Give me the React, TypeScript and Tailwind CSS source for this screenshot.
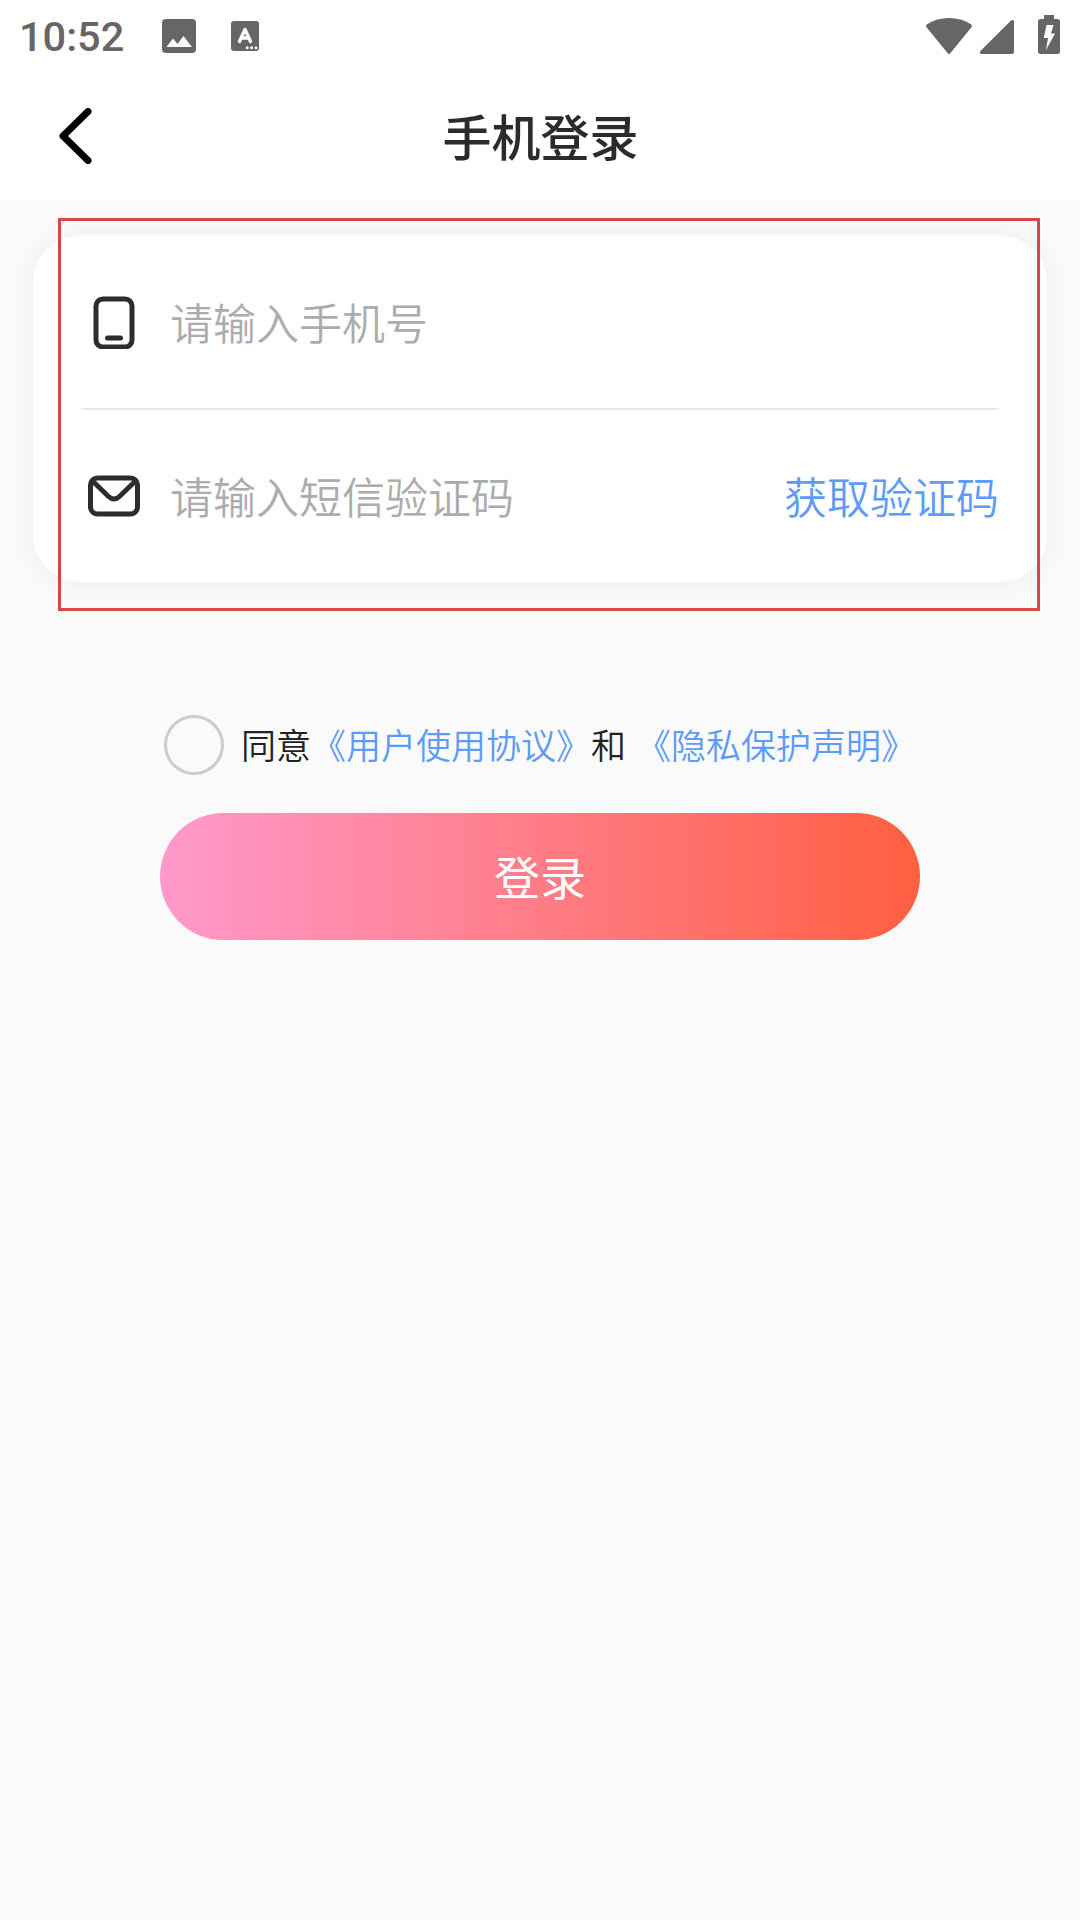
import { useState } from 'react';

const LINK_COLOR = 'text-[#5c9bf8]';

function StatusBar() {
  return (
    <div className="flex h-[72px] items-center justify-between bg-white pl-[19px] pr-5 text-[#666666]">
      <div className="flex items-center">
        <span className="w-[143px] pt-[2px] font-[Roboto] text-[41.5px] leading-none font-medium">10:52</span>
        <svg className="h-[34px] w-[34px]" viewBox="0 0 34 34" fill="currentColor">
          <rect width="34" height="34" rx="4" />
          <path d="M4.5 28 L11 19.5 L15.5 25 L21.5 17 L30 28 Z" fill="#fff" />
        </svg>
        <svg className="ml-[35px] h-[30px] w-7" viewBox="0 0 28 30" fill="none">
          <rect width="28" height="30" rx="3" fill="currentColor" />
          <path d="M8.5 20.5 L14 8.5 L19.5 20.5 M10.5 17 H17.5" stroke="#fff" strokeWidth="3.4" strokeLinecap="round" strokeLinejoin="round" />
          <circle cx="16.2" cy="26.7" r="1.5" fill="#fff" />
          <circle cx="20.6" cy="26.7" r="1.5" fill="#fff" />
          <circle cx="25" cy="26.7" r="1.5" fill="#fff" />
        </svg>
      </div>

      <div className="flex items-center pb-[3px]">
        <svg className="mt-0.5 h-9 w-[46px]" viewBox="0 0 46 36" fill="currentColor">
          <path d="M1 6.3 C14 -2.1 32 -2.1 45 6.3 Q46.5 7.7 45.4 9.3 L24.5 35 Q23 36.8 21.5 35 L0.6 9.3 Q-0.5 7.7 1 6.3 Z" />
        </svg>
        <svg className="ml-2 mt-[5px] h-[34px] w-[34px]" viewBox="0 0 34 34" fill="currentColor">
          <path d="M30.8 0.7 Q34 -1.4 34 2 V32 Q34 34 32 34 H2 Q-1.4 34 0.7 30.8 Z" />
        </svg>
        <svg className="ml-6 h-[39px] w-[22px]" viewBox="0 0 22 39" fill="currentColor">
          <path d="M6 0 H16 V4 H19.5 Q22 4 22 6.5 V36.5 Q22 39 19.5 39 H2.5 Q0 39 0 36.5 V6.5 Q0 4 2.5 4 H6 Z" />
          <path d="M8.5 10 H15.5 L13 18.5 H17 L8 35 L10 23 H5.8 Z" fill="#fff" />
        </svg>
      </div>
    </div>
  );
}

function Header() {
  return (
    <header className="grid h-[129px] grid-cols-[120px_1fr_120px] items-center bg-white">
      <button type="button" aria-label="返回" className="pl-[58px] pb-0.5">
        <svg className="h-14 w-9" viewBox="0 0 36 56" fill="none">
          <path d="M30 3.5 L5 28 L30 52.5" stroke="#000" strokeWidth="7" strokeLinecap="round" strokeLinejoin="round" />
        </svg>
      </button>
      <h1 className="pb-[4px] pl-px text-center text-[49px] leading-none font-medium text-[#2b2b2b]">手机登录</h1>
    </header>
  );
}

function PhoneIcon() {
  return (
    <svg className="h-[54px] w-[54px]" viewBox="0 0 54 54" fill="none" stroke="#2d2d2d" strokeWidth="5" strokeLinecap="round">
      <rect x="9" y="4" width="36" height="48" rx="7" />
      <path d="M20.5 43 H33.5" />
    </svg>
  );
}

function MailIcon() {
  return (
    <svg className="h-[54px] w-[54px]" viewBox="0 0 54 54" fill="none" stroke="#2d2d2d" strokeWidth="5">
      <rect x="3.5" y="9" width="47" height="36" rx="7" />
      <path d="M5 11.5 L21.5 27.5 Q27 32.5 32.5 27.5 L49 11.5" />
    </svg>
  );
}

export default function App() {
  const [agreed, setAgreed] = useState(false);

  return (
    <div className="min-h-[1920px] w-[1080px] bg-[#fafafa] font-['Noto_Sans_CJK_SC',sans-serif] font-[350]">
      <StatusBar />
      <Header />

      <main className="pt-[34px]">
        <section className="relative mx-[33px] h-[347px] rounded-[48px] bg-white px-12 shadow-[0_0_30px_rgba(0,0,0,0.06)]">
          <div className="flex h-[175px] items-center border-b-2 border-[#e9e9e9]">
            <div className="ml-[6px] w-[83px]">
              <PhoneIcon />
            </div>
            <span className="text-[43px] leading-none text-[#acacac]">请输入手机号</span>
          </div>
          <div className="flex h-[172px] items-center">
            <div className="ml-[6px] w-[83px]">
              <MailIcon />
            </div>
            <span className="flex-1 pb-px text-[43px] leading-none text-[#acacac]">请输入短信验证码</span>
            <button type="button" className={`pb-px text-[43px] leading-none ${LINK_COLOR}`}>获取验证码</button>
          </div>

          {/* Red outline drawn over the form */}
          <div className="pointer-events-none absolute top-[-17px] left-[25px] h-[393px] w-[982px] border-3 border-[#d94548]" />
        </section>

        <div className="mt-[133px] ml-[164px] flex h-[60px] items-center">
          <button
            type="button"
            aria-label="同意"
            onClick={() => setAgreed(!agreed)}
            className={`h-[60px] w-[60px] rounded-full border-3 border-[#cccccc] ${agreed ? 'bg-[#ff6347]' : ''}`}
          />
          <p className="ml-[17px] flex pb-[4px] text-[35px] leading-none text-[#222222]">
            <span>同意</span>
            <a className={LINK_COLOR}>《用户使用协议》</a>
            <span>和</span>
            <a className={`ml-[10px] ${LINK_COLOR}`}>《隐私保护声明》</a>
          </p>
        </div>

        <button
          type="button"
          className="mx-auto mt-[38px] flex h-[127px] w-[760px] items-center justify-center rounded-full bg-linear-[to_right,#ff99cc,#ff5f40] pb-1 text-[46px] leading-none font-normal text-white"
        >
          登录
        </button>
      </main>
    </div>
  );
}
